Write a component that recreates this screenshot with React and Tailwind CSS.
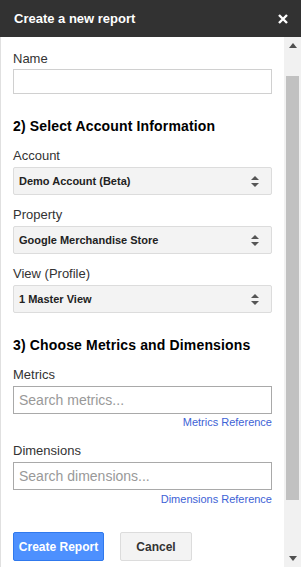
import React from 'react';

const font = { fontFamily: '"Liberation Sans", Arial, sans-serif' };

function SelectBox({ value }) {
  return (
    <div className="h-[28px] flex items-center justify-between rounded-[2px] border border-[#dcdcdc] bg-[#f3f3f3] pl-[5px] pr-[12px]">
      <span className="text-[11px] font-bold text-[#222]">{value}</span>
      {/* up/down arrows */}
      <svg width="8" height="11" viewBox="0 0 8 11">
        <path d="M4 0 L8 4 L0 4 Z" fill="#555" />
        <path d="M0 7 L8 7 L4 11 Z" fill="#555" />
      </svg>
    </div>
  );
}

function Label({ children, className = '' }) {
  return <div className={`h-[16px] leading-[16px] text-[13px] text-[#333] ${className}`}>{children}</div>;
}

function App() {
  return (
    <div className="w-[301px] h-[567px] flex flex-col overflow-hidden bg-white" style={font}>
      {/* header */}
      <div className="h-[37px] shrink-0 bg-[#323232] flex items-center justify-between pl-[14px] pr-[13px]">
        <span className="text-[13px] font-bold text-white">Create a new report</span>
        <svg width="10" height="10" viewBox="0 0 10 10">
          <path d="M1 1 L9 9 M9 1 L1 9" stroke="#fff" strokeWidth="2.4" />
        </svg>
      </div>

      <div className="flex flex-1 min-h-0">
        {/* form */}
        <div className="flex-1 border-l border-[#e0e0e0] pl-[12px] pr-[12px] pt-[14px] overflow-hidden">
          <Label className="mb-[2px]">Name</Label>
          <div className="h-[25px] border border-[#d0d0d0] bg-white" />

          <h2 className="mt-[24px] h-[17px] leading-[17px] text-[14px] font-bold text-black tracking-[0.15px]">
            2) Select Account Information
          </h2>

          <Label className="mt-[13px] mb-[3px]">Account</Label>
          <SelectBox value="Demo Account (Beta)" />

          <Label className="mt-[12px] mb-[3px]">Property</Label>
          <SelectBox value="Google Merchandise Store" />

          <Label className="mt-[12px] mb-[3px]">View (Profile)</Label>
          <SelectBox value="1 Master View" />

          <h2 className="mt-[24px] h-[17px] leading-[17px] text-[14px] font-bold text-black tracking-[0.15px]">
            3) Choose Metrics and Dimensions
          </h2>

          <Label className="mt-[13px] mb-[3px]">Metrics</Label>
          <div className="h-[28px] border border-[#a9a9a9] bg-white flex items-center pl-[5px] text-[14px] text-[#999]">
            Search metrics...
          </div>
          <div className="mt-[2px] h-[13px] leading-[13px] text-right text-[11px] text-[#3d62d6]">Metrics Reference</div>

          <Label className="mt-[14px] mb-[3px]">Dimensions</Label>
          <div className="h-[28px] border border-[#a9a9a9] bg-white flex items-center pl-[5px] text-[14px] text-[#999]">
            Search dimensions...
          </div>
          <div className="mt-[3px] h-[13px] leading-[13px] text-right text-[11px] text-[#3d62d6]">Dimensions Reference</div>

          <div className="mt-[26px] flex gap-[16px]">
            <button className="h-[29px] w-[91px] rounded-[2px] border border-[#3079ed] bg-[#4d90fe] text-[12px] font-bold text-white">
              Create Report
            </button>
            <button className="h-[29px] w-[72px] rounded-[2px] border border-[#dcdcdc] bg-[#f3f3f3] text-[12px] font-bold text-[#333]">
              Cancel
            </button>
          </div>
        </div>

        {/* scrollbar */}
        <div className="w-[17px] shrink-0 bg-[#f1f1f1] flex flex-col items-center">
          <svg className="mt-[6px]" width="8" height="5" viewBox="0 0 8 5">
            <path d="M4 0 L8 5 L0 5 Z" fill="#505050" />
          </svg>
          <div className="mt-[28px] w-[13px] h-[424px] bg-[#c1c1c1]" />
          <div className="flex-1" />
          <svg className="mb-[6px]" width="8" height="5" viewBox="0 0 8 5">
            <path d="M0 0 L8 0 L4 5 Z" fill="#505050" />
          </svg>
        </div>
      </div>
    </div>
  );
}

export default App;
